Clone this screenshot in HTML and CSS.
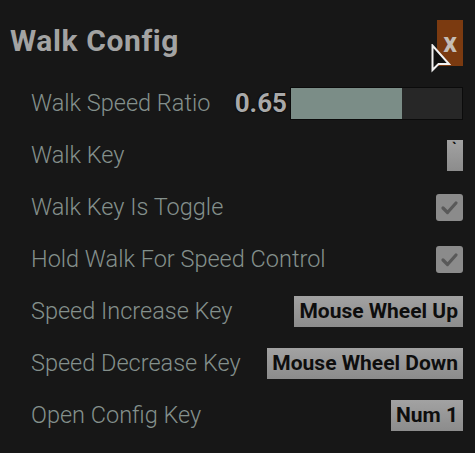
FILE: index.html
```html
<!DOCTYPE html>
<html lang="en">
<head>
    <meta charset="UTF-8">
    <meta name="viewport" content="width=device-width, initial-scale=1.0">
    <title>Walk Config</title>
    <link rel="stylesheet" href="styles.css">
</head>
<body>
    <div class="panel">
        <div class="header">
            <h1>Walk Config</h1>
            <button class="close-btn">x</button>
        </div>
        <div class="rows">
            <div class="row">
                <span class="label">Walk Speed Ratio</span>
                <div class="slider-wrap">
                    <span class="value">0.65</span>
                    <div class="slider"><div class="fill" style="width: 65%"></div></div>
                </div>
            </div>
            <div class="row">
                <span class="label">Walk Key</span>
                <span class="key key-small">`</span>
            </div>
            <div class="row">
                <span class="label">Walk Key Is Toggle</span>
                <span class="check">
                    <svg viewBox="0 0 27 27" width="27" height="27"><path d="M7 14 L11.5 18.5 L20 9" fill="none" stroke="#595959" stroke-width="3.2" stroke-linecap="round" stroke-linejoin="round"/></svg>
                </span>
            </div>
            <div class="row">
                <span class="label">Hold Walk For Speed Control</span>
                <span class="check">
                    <svg viewBox="0 0 27 27" width="27" height="27"><path d="M7 14 L11.5 18.5 L20 9" fill="none" stroke="#595959" stroke-width="3.2" stroke-linecap="round" stroke-linejoin="round"/></svg>
                </span>
            </div>
            <div class="row">
                <span class="label">Speed Increase Key</span>
                <span class="key">Mouse Wheel Up</span>
            </div>
            <div class="row">
                <span class="label">Speed Decrease Key</span>
                <span class="key">Mouse Wheel Down</span>
            </div>
            <div class="row">
                <span class="label">Open Config Key</span>
                <span class="key">Num 1</span>
            </div>
        </div>
        <svg class="cursor" viewBox="0 0 20 30" width="20" height="30">
            <path d="M1.5 1.5 L1.5 26 L7.5 20 L18 20 Z" fill="#111" stroke="#f2f2f2" stroke-width="2" stroke-linejoin="miter"/>
        </svg>
    </div>
</body>
</html>
```

FILE: styles.css
```css
body {
    margin: 0;
    background: #171717;
    font-family: Roboto, "Liberation Sans", sans-serif;
}
.panel {
    position: relative;
    width: 475px;
    height: 453px;
    box-sizing: border-box;
    padding: 20px 12px 0 10px;
}
.header {
    display: flex;
    justify-content: space-between;
    align-items: center;
    height: 46px;
}
h1 {
    margin: 0 0 6px;
    font-size: 30px;
    font-weight: bold;
    letter-spacing: 0.6px;
    color: #a3a3a3;
}
.close-btn {
    width: 26px;
    height: 46px;
    padding: 0;
    border: none;
    background: #7b3a10;
    color: #c4bcb6;
    font-family: Roboto, "Liberation Sans", sans-serif;
    font-size: 27px;
    font-weight: bold;
}
.rows {
    margin-top: 11px;
    padding-left: 21px;
}
.row {
    display: flex;
    justify-content: space-between;
    align-items: center;
    height: 52px;
}
.label {
    font-size: 23.5px;
    font-weight: 300;
    color: #84908c;
}
.slider-wrap {
    display: flex;
    align-items: center;
    gap: 3px;
}
.value {
    font-size: 26px;
    font-weight: bold;
    color: #a9a9a9;
    text-shadow: 0 0 2px #000, 0 0 1px #000;
}
.slider {
    width: 171px;
    height: 31px;
    border: 1px solid #0b0b0b;
    background: #272727;
}
.fill {
    height: 100%;
    background: #7b8d87;
}
.key {
    display: flex;
    align-items: center;
    height: 31px;
    padding: 0 5px;
    background: linear-gradient(#a2a2a2, #8c8c8c);
    color: #0e0e0e;
    font-size: 21px;
    font-weight: bold;
}
.key-small {
    width: 6px;
    height: 31px;
    align-items: flex-start;
    font-size: 14px;
    padding: 0 5px;
}
.check {
    display: block;
    width: 27px;
    height: 27px;
    border-radius: 3px;
    background: #8b8b8b;
}
.check svg {
    display: block;
}
.cursor {
    position: absolute;
    left: 431px;
    top: 44px;
}
```
